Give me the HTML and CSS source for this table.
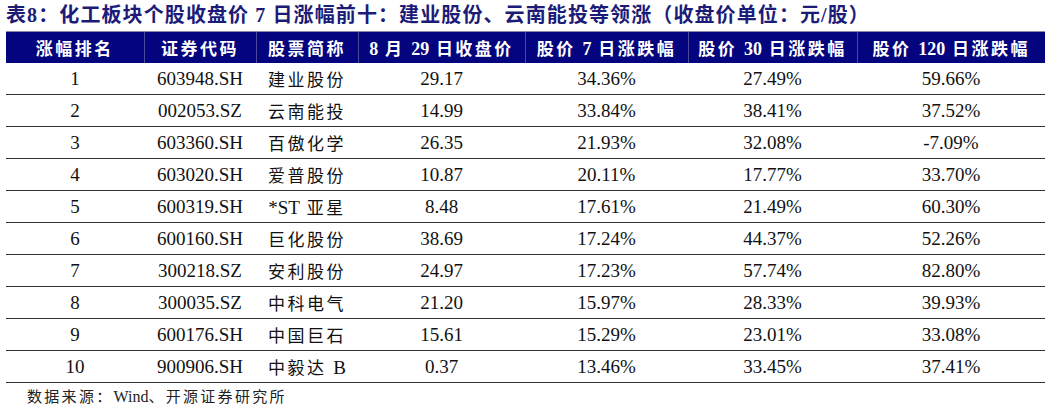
FILE: index.html
```html
<!DOCTYPE html>
<html lang="zh-CN">
<head>
<meta charset="utf-8">
<link rel="stylesheet" href="styles.css">
</head>
<body>
<div class="page">
  <div class="title">表8：化工板块个股收盘价 7 日涨幅前十：建业股份、云南能投等领涨（收盘价单位：元/股）</div>
  <table class="tbl">
    <colgroup>
      <col class="c1"><col class="c2"><col class="c3"><col class="c4"><col class="c5"><col class="c6"><col class="c7">
    </colgroup>
    <thead>
      <tr>
        <th>涨幅排名</th><th>证券代码</th><th>股票简称</th><th><span class="lat">8</span> 月 <span class="lat">29</span> 日收盘价</th><th>股价 <span class="lat">7</span> 日涨跌幅</th><th>股价 <span class="lat">30</span> 日涨跌幅</th><th>股价 <span class="lat">120</span> 日涨跌幅</th>
      </tr>
    </thead>
    <tbody>
      <tr><td>1</td><td>603948.SH</td><td class="cn">建业股份</td><td>29.17</td><td>34.36%</td><td>27.49%</td><td>59.66%</td></tr>
      <tr><td>2</td><td>002053.SZ</td><td class="cn">云南能投</td><td>14.99</td><td>33.84%</td><td>38.41%</td><td>37.52%</td></tr>
      <tr><td>3</td><td>603360.SH</td><td class="cn">百傲化学</td><td>26.35</td><td>21.93%</td><td>32.08%</td><td>-7.09%</td></tr>
      <tr><td>4</td><td>603020.SH</td><td class="cn">爱普股份</td><td>10.87</td><td>20.11%</td><td>17.77%</td><td>33.70%</td></tr>
      <tr><td>5</td><td>600319.SH</td><td class="cn"><span class="lat">*ST</span> 亚星</td><td>8.48</td><td>17.61%</td><td>21.49%</td><td>60.30%</td></tr>
      <tr><td>6</td><td>600160.SH</td><td class="cn">巨化股份</td><td>38.69</td><td>17.24%</td><td>44.37%</td><td>52.26%</td></tr>
      <tr><td>7</td><td>300218.SZ</td><td class="cn">安利股份</td><td>24.97</td><td>17.23%</td><td>57.74%</td><td>82.80%</td></tr>
      <tr><td>8</td><td>300035.SZ</td><td class="cn">中科电气</td><td>21.20</td><td>15.97%</td><td>28.33%</td><td>39.93%</td></tr>
      <tr><td>9</td><td>600176.SH</td><td class="cn">中国巨石</td><td>15.61</td><td>15.29%</td><td>23.01%</td><td>33.08%</td></tr>
      <tr><td>10</td><td>900906.SH</td><td class="cn">中毅达 <span class="lat">B</span></td><td>0.37</td><td>13.46%</td><td>33.45%</td><td>37.41%</td></tr>
    </tbody>
  </table>
  <div class="source">数据来源：<span class="lat">Wind</span>、开源证券研究所</div>
</div>
</body>
</html>
```
FILE: styles.css
```css
html, body {
  margin: 0;
  padding: 0;
  background: #ffffff;
}
.page {
  padding: 3px 7px 0 6px;
  font-family: "Liberation Serif", "Noto Sans CJK SC", serif;
  color: #111;
}
.title {
  font-size: 20px;
  font-weight: bold;
  color: #1c1c78;
  letter-spacing: 1.1px;
  line-height: 24px;
  height: 28px;
  white-space: nowrap;
}
.tbl {
  border-collapse: collapse;
  table-layout: fixed;
  width: 1039px;
}
.c1 { width: 138px; }
.c2 { width: 112px; }
.c3 { width: 102px; }
.c4 { width: 167px; }
.c5 { width: 163px; }
.c6 { width: 169px; }
.c7 { width: 188px; }
.tbl th {
  background: #04047e;
  color: #ffffff;
  font-size: 17px;
  font-weight: bold;
  letter-spacing: 2.5px;
  height: 31px;
  padding: 0;
  border-top: 1px solid #8a8aa8;
  border-left: 1px solid #4a4a9a;
  text-align: center;
  white-space: nowrap;
}
.tbl th:first-child { border-left: none; }
.tbl td {
  height: 31px;
  padding: 0;
  text-align: center;
  font-size: 19px;
  border-bottom: 1px solid #333;
  white-space: nowrap;
}
.tbl td.cn {
  font-size: 17px;
  letter-spacing: 2.5px;
}
.lat {
  letter-spacing: 0;
  font-size: 19px;
}
.tbl th .lat {
  font-size: 18px;
}
.source {
  padding-left: 21px;
  padding-top: 4px;
  font-size: 15px;
  letter-spacing: 2.3px;
  color: #222;
  line-height: 20px;
}
.source .lat {
  font-size: 16px;
  letter-spacing: 0;
}
```
